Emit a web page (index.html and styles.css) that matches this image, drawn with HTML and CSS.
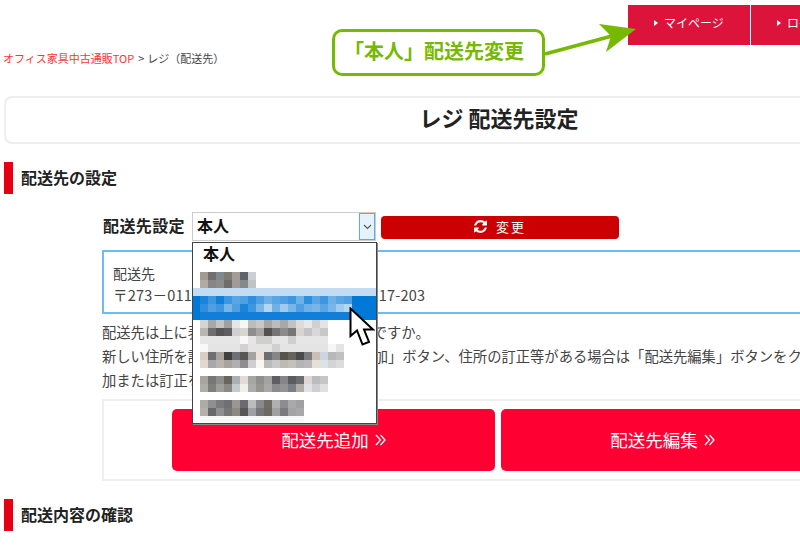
FILE: index.html
```html
<!DOCTYPE html>
<html lang="ja">
<head>
<meta charset="utf-8">
<title>レジ 配送先設定</title>
<link rel="stylesheet" href="styles.css">
</head>
<body>
<div class="page">
  <nav class="topnav">
    <a class="navitem"><span class="tri"></span>マイページ</a>
    <a class="navitem"><span class="tri"></span>ログアウト</a>
  </nav>
  <div class="crumbs"><a class="crumblink">オフィス家具中古通販TOP</a><span class="gt">&gt;</span>レジ（配送先）</div>
  <h1 class="title">レジ 配送先設定</h1>
  <h2 class="sec">配送先の設定</h2>
  <section class="body">
    <div class="formrow">
      <span class="formlabel">配送先設定</span>
      <div class="select">
        <span class="selval">本人</span>
        <span class="selbtn"><svg width="9" height="6" viewBox="0 0 9 6"><path d="M1 1l3.500 3.500L8 1" fill="none" stroke="#555" stroke-width="1.100"/></svg></span>
      </div>
      <button class="change"><svg class="refresh" viewBox="0 0 1536 1536"><path fill="#fff" d="M1511 928q0 5-1 7-64 268-268 434.500t-478 166.500q-146 0-282.500-55t-243.500-157l-129 129q-19 19-45 19t-45-19-19-45v-448q0-26 19-45t45-19h448q26 0 45 19t19 45-19 45l-137 137q71 66 161 102t187 36q134 0 250-65t186-179q11-17 53-117 8-23 30-23h192q13 0 22.500 9.500t9.500 22.500zm25-800v448q0 26-19 45t-45 19h-448q-26 0-45-19t-19-45 19-45l138-138q-148-137-349-137-134 0-250 65t-186 179q-11 17-53 117-8 23-30 23h-199q-13 0-22.500-9.500t-9.500-22.500v-7q65-268 270-434.500t480-166.500q146 0 284 55.500t245 156.500l130-129q19-19 45-19t45 19 19 45z"/></svg>変更</button>
    </div>
    <div class="addr">
      <div>配送先</div>
      <div class="addrline">〒273－0115 千葉県鎌ケ谷市東道野辺1-17-203</div>
    </div>
    <p class="note">配送先は上に表示している住所でよろしいですか。<br>新しい住所を設定する場合には「配送先追加」ボタン、住所の訂正等がある場合は「配送先編集」ボタンをクリックして追<br>加または訂正を行ってください。</p>
    <div class="btnbox">
      <a class="bigbtn">配送先追加<svg class="chev" width="11" height="12" viewBox="0 0 11 12"><path d="M1 1l4.500 5L1 11M5.500 1l4.500 5-4.500 5" fill="none" stroke="#fff" stroke-width="1.300"/></svg></a>
      <a class="bigbtn">配送先編集<svg class="chev" width="11" height="12" viewBox="0 0 11 12"><path d="M1 1l4.500 5L1 11M5.500 1l4.500 5-4.500 5" fill="none" stroke="#fff" stroke-width="1.300"/></svg></a>
    </div>
  </section>
  <h2 class="sec sec2">配送内容の確認</h2>

  <div class="callout">「本人」配送先変更</div>
  <svg class="arrow" width="110" height="40" viewBox="540 20 110 40"><path d="M545 54L612 36" stroke="#76b900" stroke-width="3.500" fill="none"/><path d="M636 29L599 24L611 36L606 52Z" fill="#76b900"/></svg>

  <div class="dropdown">
    <div class="opt">本人</div>
    <svg class="mosaic" width="183" height="157" viewBox="193 266 183 157" shape-rendering="crispEdges">
      <rect x="193" y="288" width="183" height="8" fill="#c1dcf3"/>
      <rect x="193" y="296" width="183" height="24" fill="#0078d7"/>
      <g fill="#a39b92"><rect x="200" y="272" width="8" height="8"/><rect x="200" y="280" width="8" height="8" fill="#b0aba5"/></g>
      <rect x="208" y="272" width="8" height="8" fill="#6f6f6f"/><rect x="216" y="272" width="8" height="8" fill="#808890"/><rect x="224" y="272" width="8" height="8" fill="#7f7a72"/><rect x="232" y="272" width="8" height="8" fill="#a29d96"/><rect x="240" y="272" width="8" height="8" fill="#5f646c"/><rect x="248" y="272" width="8" height="8" fill="#ccd0d4"/>
      <rect x="208" y="280" width="8" height="8" fill="#888684"/><rect x="216" y="280" width="8" height="8" fill="#8e8c8a"/><rect x="224" y="280" width="8" height="8" fill="#6f6c6a"/><rect x="232" y="280" width="8" height="8" fill="#a09b96"/><rect x="240" y="280" width="8" height="8" fill="#85888c"/><rect x="248" y="280" width="8" height="8" fill="#c0c2c4"/>

      <rect x="200" y="296" width="8" height="8" fill="#1a84da"/><rect x="208" y="296" width="8" height="8" fill="#3d97e0"/><rect x="216" y="296" width="8" height="8" fill="#0f7fd9"/><rect x="224" y="296" width="8" height="8" fill="#3d97e0"/><rect x="232" y="296" width="8" height="8" fill="#5aa6e4"/><rect x="240" y="296" width="8" height="8" fill="#4f9fe2"/><rect x="248" y="296" width="8" height="8" fill="#2f8fde"/><rect x="256" y="296" width="8" height="8" fill="#4f9fe2"/><rect x="264" y="296" width="8" height="8" fill="#6fb0e7"/><rect x="272" y="296" width="8" height="8" fill="#5aa6e4"/><rect x="280" y="296" width="8" height="8" fill="#4f9fe2"/><rect x="288" y="296" width="8" height="8" fill="#3d97e0"/><rect x="296" y="296" width="8" height="8" fill="#6fb0e7"/><rect x="304" y="296" width="8" height="8" fill="#2f8fde"/><rect x="312" y="296" width="8" height="8" fill="#5aa6e4"/><rect x="320" y="296" width="8" height="8" fill="#3d97e0"/><rect x="328" y="296" width="8" height="8" fill="#6fb0e7"/><rect x="336" y="296" width="8" height="8" fill="#5aa6e4"/><rect x="344" y="296" width="8" height="8" fill="#4f9fe2"/>
      <rect x="200" y="304" width="8" height="8" fill="#2f8fde"/><rect x="208" y="304" width="8" height="8" fill="#4f9fe2"/><rect x="216" y="304" width="8" height="8" fill="#3d97e0"/><rect x="224" y="304" width="8" height="8" fill="#78b5e9"/><rect x="232" y="304" width="8" height="8" fill="#4f9fe2"/><rect x="240" y="304" width="8" height="8" fill="#1a84da"/><rect x="248" y="304" width="8" height="8" fill="#3d97e0"/><rect x="256" y="304" width="8" height="8" fill="#78b5e9"/><rect x="264" y="304" width="8" height="8" fill="#b3d6f2"/><rect x="272" y="304" width="8" height="8" fill="#6fb0e7"/><rect x="280" y="304" width="8" height="8" fill="#a0cbef"/><rect x="288" y="304" width="8" height="8" fill="#78b5e9"/><rect x="296" y="304" width="8" height="8" fill="#4f9fe2"/><rect x="304" y="304" width="8" height="8" fill="#6fb0e7"/><rect x="312" y="304" width="8" height="8" fill="#78b5e9"/><rect x="320" y="304" width="8" height="8" fill="#5aa6e4"/><rect x="328" y="304" width="8" height="8" fill="#78b5e9"/><rect x="336" y="304" width="8" height="8" fill="#a0cbef"/><rect x="344" y="304" width="8" height="8" fill="#b3d6f2"/>
      <rect x="200" y="312" width="152" height="8" fill="#117fd9"/>

      <rect x="200" y="320" width="8" height="8" fill="#d4d4d2"/><rect x="208" y="320" width="8" height="8" fill="#a8a8a6"/><rect x="216" y="320" width="8" height="8" fill="#c4c4c2"/><rect x="224" y="320" width="8" height="8" fill="#a0a09e"/><rect x="232" y="320" width="8" height="8" fill="#e6e6e8"/><rect x="240" y="320" width="8" height="8" fill="#f6f6f4"/><rect x="248" y="320" width="8" height="8" fill="#bcbcba"/><rect x="256" y="320" width="8" height="8" fill="#c8c8c6"/><rect x="264" y="320" width="8" height="8" fill="#a6a6a4"/><rect x="272" y="320" width="8" height="8" fill="#bcbcbc"/><rect x="280" y="320" width="8" height="8" fill="#a8a8a8"/><rect x="288" y="320" width="8" height="8" fill="#c2c2c2"/><rect x="296" y="320" width="8" height="8" fill="#dedcda"/><rect x="304" y="320" width="8" height="8" fill="#e8e8ea"/><rect x="312" y="320" width="8" height="8" fill="#d0d0d0"/><rect x="320" y="320" width="8" height="8" fill="#e4e4e4"/>
      <rect x="200" y="328" width="8" height="8" fill="#b8b6b4"/><rect x="208" y="328" width="8" height="8" fill="#6e6e6e"/><rect x="216" y="328" width="8" height="8" fill="#555557"/><rect x="224" y="328" width="8" height="8" fill="#5e5e60"/><rect x="232" y="328" width="8" height="8" fill="#cfcfd1"/><rect x="240" y="328" width="8" height="8" fill="#d8d4d0"/><rect x="248" y="328" width="8" height="8" fill="#8e8e8e"/><rect x="256" y="328" width="8" height="8" fill="#a8a6a2"/><rect x="264" y="328" width="8" height="8" fill="#55514f"/><rect x="272" y="328" width="8" height="8" fill="#777573"/><rect x="280" y="328" width="8" height="8" fill="#8b8b8d"/><rect x="288" y="328" width="8" height="8" fill="#767679"/><rect x="296" y="328" width="8" height="8" fill="#d8d4cf"/><rect x="304" y="328" width="8" height="8" fill="#c4c4c6"/><rect x="312" y="328" width="8" height="8" fill="#d8d8d8"/><rect x="320" y="328" width="8" height="8" fill="#c8c8c8"/>
      <rect x="200" y="336" width="128" height="8" fill="#e6e6e6"/><rect x="240" y="336" width="8" height="8" fill="#f8f8f8"/><rect x="256" y="336" width="16" height="8" fill="#cfcfcd"/><rect x="288" y="336" width="8" height="8" fill="#cfcfcf"/>
      <rect x="200" y="344" width="8" height="8" fill="#f8f8f8"/><rect x="208" y="344" width="136" height="8" fill="#e4e4e4"/><rect x="240" y="344" width="8" height="8" fill="#d4d2cf"/><rect x="272" y="344" width="8" height="8" fill="#d0d0d0"/><rect x="328" y="344" width="8" height="8" fill="#f6f6f6"/>
      <rect x="200" y="352" width="8" height="8" fill="#d8cec4"/><rect x="208" y="352" width="8" height="8" fill="#6d6f73"/><rect x="216" y="352" width="8" height="8" fill="#a8a39d"/><rect x="224" y="352" width="8" height="8" fill="#3f3f3f"/><rect x="232" y="352" width="8" height="8" fill="#707074"/><rect x="240" y="352" width="8" height="8" fill="#5a5656"/><rect x="248" y="352" width="8" height="8" fill="#a3a3a3"/><rect x="256" y="352" width="8" height="8" fill="#ece2d8"/><rect x="264" y="352" width="8" height="8" fill="#6c6e72"/><rect x="272" y="352" width="8" height="8" fill="#868686"/><rect x="280" y="352" width="8" height="8" fill="#55534d"/><rect x="288" y="352" width="8" height="8" fill="#66635d"/><rect x="296" y="352" width="8" height="8" fill="#4a4a4c"/><rect x="304" y="352" width="8" height="8" fill="#7b7b7d"/><rect x="312" y="352" width="8" height="8" fill="#c9bfb5"/><rect x="320" y="352" width="8" height="8" fill="#ccd6e2"/><rect x="328" y="352" width="8" height="8" fill="#b8b8b8"/><rect x="336" y="352" width="8" height="8" fill="#c0c0c0"/>
      <rect x="200" y="360" width="8" height="8" fill="#e2d8d0"/><rect x="208" y="360" width="8" height="8" fill="#a6a8ac"/><rect x="216" y="360" width="8" height="8" fill="#b8b4b0"/><rect x="224" y="360" width="8" height="8" fill="#aaa39d"/><rect x="232" y="360" width="8" height="8" fill="#b0b0b2"/><rect x="240" y="360" width="8" height="8" fill="#8e8e8e"/><rect x="248" y="360" width="8" height="8" fill="#cfcfd1"/><rect x="256" y="360" width="8" height="8" fill="#faf7f3"/><rect x="264" y="360" width="8" height="8" fill="#bdbbb7"/><rect x="272" y="360" width="8" height="8" fill="#c9c9c9"/><rect x="280" y="360" width="8" height="8" fill="#bcbab4"/><rect x="288" y="360" width="8" height="8" fill="#c4c0ba"/><rect x="296" y="360" width="8" height="8" fill="#b4b4b6"/><rect x="304" y="360" width="8" height="8" fill="#b9b9bb"/><rect x="312" y="360" width="8" height="8" fill="#e6e0d8"/><rect x="320" y="360" width="8" height="8" fill="#dde2e8"/><rect x="328" y="360" width="8" height="8" fill="#d4d4d4"/><rect x="336" y="360" width="8" height="8" fill="#dcdcdc"/>

      <rect x="200" y="376" width="8" height="8" fill="#a8a49e"/><rect x="208" y="376" width="8" height="8" fill="#777777"/><rect x="216" y="376" width="8" height="8" fill="#8d8d8b"/><rect x="224" y="376" width="8" height="8" fill="#66665c"/><rect x="232" y="376" width="8" height="8" fill="#abb0b4"/><rect x="240" y="376" width="8" height="8" fill="#e2dcd8"/><rect x="248" y="376" width="8" height="8" fill="#a6a6a4"/><rect x="256" y="376" width="8" height="8" fill="#8f8f8d"/><rect x="264" y="376" width="8" height="8" fill="#a3a3a1"/><rect x="272" y="376" width="8" height="8" fill="#5f5f61"/><rect x="280" y="376" width="8" height="8" fill="#868688"/><rect x="288" y="376" width="8" height="8" fill="#5a5c60"/><rect x="296" y="376" width="8" height="8" fill="#6b6d71"/><rect x="304" y="376" width="8" height="8" fill="#ded8d4"/><rect x="312" y="376" width="8" height="8" fill="#bcbcbe"/><rect x="320" y="376" width="8" height="8" fill="#c6c6c6"/>
      <rect x="200" y="384" width="8" height="8" fill="#b0aca6"/><rect x="208" y="384" width="8" height="8" fill="#7f7f7d"/><rect x="216" y="384" width="8" height="8" fill="#9e9e9c"/><rect x="224" y="384" width="8" height="8" fill="#8a8a82"/><rect x="232" y="384" width="8" height="8" fill="#c6cace"/><rect x="240" y="384" width="8" height="8" fill="#f2eee8"/><rect x="248" y="384" width="8" height="8" fill="#acacaa"/><rect x="256" y="384" width="8" height="8" fill="#96968f"/><rect x="264" y="384" width="8" height="8" fill="#a8a8a6"/><rect x="272" y="384" width="8" height="8" fill="#8b8b8d"/><rect x="280" y="384" width="8" height="8" fill="#939395"/><rect x="288" y="384" width="8" height="8" fill="#7a7f85"/><rect x="296" y="384" width="8" height="8" fill="#b0aca6"/><rect x="304" y="384" width="8" height="8" fill="#dfe3e8"/><rect x="312" y="384" width="8" height="8" fill="#cfcfd1"/><rect x="320" y="384" width="8" height="8" fill="#e0e0e0"/>

      <rect x="200" y="400" width="8" height="8" fill="#aeaaa6"/><rect x="208" y="400" width="8" height="8" fill="#8f8f91"/><rect x="216" y="400" width="8" height="8" fill="#7a7a7c"/><rect x="224" y="400" width="8" height="8" fill="#707074"/><rect x="232" y="400" width="8" height="8" fill="#9a9690"/><rect x="240" y="400" width="8" height="8" fill="#6b6b6f"/><rect x="248" y="400" width="8" height="8" fill="#bcbcbe"/><rect x="256" y="400" width="8" height="8" fill="#8a8a8c"/><rect x="264" y="400" width="8" height="8" fill="#6f6b65"/><rect x="272" y="400" width="8" height="8" fill="#b0b0b0"/><rect x="280" y="400" width="8" height="8" fill="#8d8d8f"/><rect x="288" y="400" width="8" height="8" fill="#a9a9ab"/><rect x="296" y="400" width="8" height="8" fill="#a0a0a2"/>
      <rect x="200" y="408" width="8" height="8" fill="#b4b0ac"/><rect x="208" y="408" width="8" height="8" fill="#68686a"/><rect x="216" y="408" width="8" height="8" fill="#8f8f91"/><rect x="224" y="408" width="8" height="8" fill="#767678"/><rect x="232" y="408" width="8" height="8" fill="#8c8882"/><rect x="240" y="408" width="8" height="8" fill="#56565a"/><rect x="248" y="408" width="8" height="8" fill="#9da1a5"/><rect x="256" y="408" width="8" height="8" fill="#76767a"/><rect x="264" y="408" width="8" height="8" fill="#6d6962"/><rect x="272" y="408" width="8" height="8" fill="#a0a0a0"/><rect x="280" y="408" width="8" height="8" fill="#7b7b7f"/><rect x="288" y="408" width="8" height="8" fill="#a3a3a7"/><rect x="296" y="408" width="8" height="8" fill="#a8a8aa"/>
      <rect x="200" y="416" width="104" height="7" fill="#f8f8f8"/>
    </svg>
  </div>

  <svg class="cursor" width="26" height="40" viewBox="0 0 26 40"><path d="M1.500 1.500V29L8 23.500L13.500 37.500L20 35L15 22.500H24Z" fill="#fff" stroke="#000" stroke-width="2"/></svg>
</div>
</body>
</html>
```
FILE: styles.css
```css
* { box-sizing: border-box; }
html, body { margin: 0; padding: 0; overflow: hidden; height: 548px; background: #fff; }
body { font-family: "Noto Sans CJK JP", "Open Sans", sans-serif; color: #333; }
.page { position: relative; width: 998px; height: 548px; }

.topnav { display: flex; gap: 1px; padding: 5px 0 0 628px; height: 46px; }
.navitem { width: 122px; height: 40px; padding-bottom: 4px; background: #dc143c; color: #fff; font-size: 12px; line-height: 20px; display: flex; justify-content: center; align-items: center; gap: 6px; }
.tri { width: 0; height: 0; border-left: 4px solid #fff; border-top: 3.500px solid transparent; border-bottom: 3.500px solid transparent; }

.crumbs { margin: 5px 0 0 3px; font-size: 11px; line-height: 14px; color: #444; }
.crumblink { color: #f33; }
.gt { padding: 0 3px 0 4px; }

.title { margin: 31px 0 0 4px; height: 48px; width: 990px; border: 2px solid #eee; border-radius: 8px; font-size: 22px; font-weight: 700; line-height: 38px; text-align: center; color: #222; }

.sec { margin: 18px 0 0 4px; height: 32px; border-left: 9px solid #e60012; padding-left: 8px; font-size: 16px; font-weight: 700; line-height: 30px; color: #222; }
.sec2 { margin-top: 18px; }

.body { padding: 18px 0 0 102px; width: 998px; }
.formrow { display: flex; align-items: center; height: 29px; }
.formlabel { width: 90px; padding: 0 0 3px 1px; font-size: 16px; font-weight: 700; line-height: 26px; color: #222; letter-spacing: .4px; white-space: nowrap; }
.select { width: 184px; height: 29px; border: 1px solid #ccc; display: flex; justify-content: space-between; font-size: 16px; font-weight: 700; line-height: 24px; color: #111; }
.selval { padding-left: 4px; }
.selbtn { width: 16px; height: 27px; background: #e5f1fb; border: 1px solid #5ea9e8; display: flex; align-items: center; justify-content: center; }
.change { margin: 1px 0 0 5px; width: 238px; height: 23px; padding: 0 0 1px; border: 0; border-radius: 4px; background: #c00; color: #fff; font-family: inherit; font-size: 13px; letter-spacing: 2px; display: flex; align-items: center; justify-content: center; gap: 9px; }
.refresh { width: 13px; height: 13px; }

.addr { margin-top: 9px; height: 64px; border: 2px solid #6ebcf5; padding: 10px 9px 0; font-size: 14px; line-height: 22px; color: #444; }
.addrline { font-size: 14.500px; letter-spacing: .2px; white-space: nowrap; }

.note { margin: 6px 0 0; font-size: 14.300px; line-height: 24px; color: #444; white-space: nowrap; }

.btnbox { margin-top: 7px; height: 82px; border: 2px solid #eee; display: flex; gap: 6px; padding: 8px 0 0 68px; }
.bigbtn { width: 323px; height: 62px; padding-bottom: 2px; border-radius: 5px; background: #f03; color: #fff; font-size: 17.500px; display: flex; align-items: center; justify-content: center; gap: 6px; }
.chev { display: block; margin-top: 2px; }

.callout { position: absolute; left: 332px; top: 29px; width: 213px; height: 47px; padding-right: 9px; border: 3.500px solid #76b900; border-radius: 10px; background: #fff; color: #76b900; font-size: 20px; font-weight: 700; line-height: 38px; text-align: center; white-space: nowrap; }
.arrow { position: absolute; left: 540px; top: 20px; }

.dropdown { position: absolute; left: 192px; top: 242px; width: 185px; height: 182px; background: #fff; border: 1px solid #444; box-shadow: 1px 1px 0 #888; }
.opt { height: 23px; padding: 0 0 2px 10px; font-size: 16px; font-weight: 700; line-height: 21px; color: #111; }
.mosaic { display: block; }
.cursor { position: absolute; left: 349px; top: 307px; }
```
